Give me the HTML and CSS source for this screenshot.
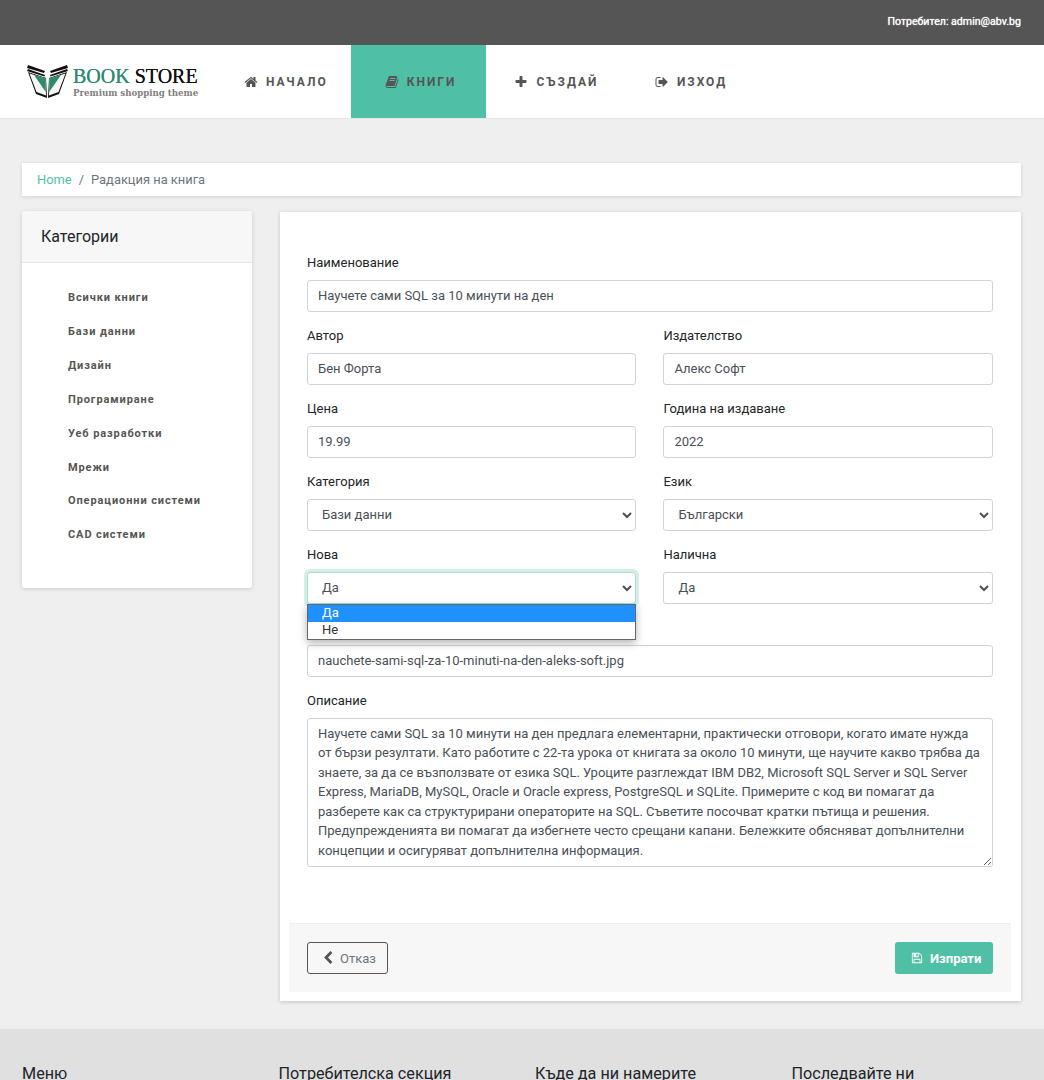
FILE: index.html
```html
<!DOCTYPE html>
<html lang="bg">
<head>
<meta charset="utf-8">
<title>Book Store</title>
<link rel="stylesheet" href="styles.css">
</head>
<body>
<div class="topbar"><span class="user">Потребител: admin@abv.bg</span></div>
<header class="header">
  <a class="logo" href="#">
    <svg class="logo-mark" viewBox="0 0 41 33" aria-hidden="true">
      <path d="M1 0l17 6-1 2L0 3zM40 0L23 6l1 2 17-5z" fill="#111"/>
      <path d="M1 4l17 6-.5 1.500L0 6zM40 4l-17 6 .5 1.500L41 6z" fill="#111"/>
      <path d="M1 7l18 6 1 20-11-4z" fill="#111"/>
      <path d="M40 7l-18 6-1 20 11-4z" fill="#111"/>
      <path d="M2.500 8.500l16 5 .5 17-9.500-3.500z" fill="#f4f7f6"/>
      <path d="M38.500 8.500l-16 5-.5 17 9.500-3.500z" fill="#f4f7f6"/>
      <path d="M7 10l11.500 3.500.3 13.500z" fill="#2e8b6a"/>
      <path d="M34 10l-11.500 3.500-.3 13.500z" fill="#2e8b6a"/>
    </svg>
    <span class="logo-text">
      <span class="logo-title"><span class="logo-green">BOOK</span> STORE</span>
      <span class="logo-sub">Premium shopping theme</span>
    </span>
  </a>
  <nav class="nav">
    <a class="nav-item nav-first" href="#"><svg class="icon" viewBox="0 0 1792 1792"><path d="M1472 992v480q0 26-19 45t-45 19h-384v-384h-256v384h-384q-26 0-45-19t-19-45v-480q0-1 .5-3t.5-3l575-474 575 474q1 2 1 6zm223-69l-62 74q-8 9-21 11h-3q-13 0-21-7l-692-577-692 577q-12 8-24 7-13-2-21-11l-62-74q-8-10-7-23.5t11-21.5l719-599q32-26 76-26t76 26l244 204v-195q0-14 9-23t23-9h192q14 0 23 9t9 23v408l219 182q10 8 11 21.5t-7 23.500z"/></svg>НАЧАЛО</a>
    <a class="nav-item nav-active" href="#"><svg class="icon" viewBox="0 0 1792 1792"><path d="M1703 478q40 57 18 129l-275 906q-19 64-76.500 107.500t-122.500 43.500h-923q-77 0-148.500-53.500t-99.500-131.500q-24-67-2-127 0-4 3-27t4-37q1-8-3-21.500t-3-19.500q2-11 8-21t16.500-23.500 16.500-23.500q23-38 45-91.500t30-91.500q3-10 .5-30t-.5-28q3-11 17-28t17-23q21-36 42-92t25-90q1-9-2.500-32t.5-28q4-13 22-30.500t22-22.500q19-26 42.500-84.500t27.500-96.500q1-8-3-25.500t-2-26.500q2-8 9-18t18-23 17-21q8-12 16.500-30.500t15-35 16-36 19.500-32 26.500-23.500 36-11.500 47.500 5.500l-1 3q38-9 51-9h761q74 0 114 56t18 130l-274 906q-36 119-71.500 153.500t-128.500 34.500h-869q-27 0-38 15-11 16-1 43 24 70 144 70h923q29 0 56-15.500t35-41.500l300-987q7-22 5-57 38 15 59 43zm-1064 2q-4 13 2 22.500t20 9.500h608q13 0 25.500-9.500t16.500-22.500l21-64q4-13-2-22.500t-20-9.500h-608q-13 0-25.500 9.500t-16.500 22.500zm-83 256q-4 13 2 22.500t20 9.500h608q13 0 25.500-9.500t16.500-22.500l21-64q4-13-2-22.500t-20-9.500h-608q-13 0-25.500 9.500t-16.500 22.500z"/></svg>КНИГИ</a>
    <a class="nav-item" href="#"><svg class="icon" viewBox="0 0 1792 1792"><path d="M1600 736v192q0 40-28 68t-68 28h-416v416q0 40-28 68t-68 28h-192q-40 0-68-28t-28-68v-416h-416q-40 0-68-28t-28-68v-192q0-40 28-68t68-28h416v-416q0-40 28-68t68-28h192q40 0 68 28t28 68v416h416q40 0 68 28t28 68z"/></svg>СЪЗДАЙ</a>
    <a class="nav-item" href="#"><svg class="icon" viewBox="0 0 1792 1792"><path d="M704 1440q0 4 1 20t.5 26.500-3 23.500-10 19.500-20.500 6.500h-320q-119 0-203.500-84.500t-84.500-203.500v-704q0-119 84.500-203.500t203.500-84.500h320q13 0 22.500 9.500t9.500 22.500q0 4 1 20t.5 26.500-3 23.500-10 19.500-20.500 6.500h-320q-66 0-113 47t-47 113v704q0 66 47 113t113 47h312l11.500 1 11.500 3 8 5.500 7 9 2 13.500zm928-544q0 26-19 45l-544 544q-19 19-45 19t-45-19-19-45v-288h-448q-26 0-45-19t-19-45v-384q0-26 19-45t45-19h448v-288q0-26 19-45t45-19 45 19l544 544q19 19 19 45z"/></svg>ИЗХОД</a>
  </nav>
</header>

<main class="page">
  <div class="breadcrumb"><a href="#">Home</a><span class="sep">/</span><span class="crumb">Радакция на книга</span></div>
  <div class="layout">
    <aside class="side-card">
      <div class="side-head">Категории</div>
      <ul class="cat-list">
        <li><a href="#">Всички книги</a></li>
        <li><a href="#">Бази данни</a></li>
        <li><a href="#">Дизайн</a></li>
        <li><a href="#">Програмиране</a></li>
        <li><a href="#">Уеб разработки</a></li>
        <li><a href="#">Мрежи</a></li>
        <li><a href="#">Операционни системи</a></li>
        <li><a href="#">CAD системи</a></li>
      </ul>
    </aside>
    <form class="main-card">
      <div class="form-body">
        <div class="group">
          <label class="label">Наименование</label>
          <input class="control" type="text" value="Научете сами SQL за 10 минути на ден">
        </div>
        <div class="row">
          <div class="group"><label class="label">Автор</label><input class="control" type="text" value="Бен Форта"></div>
          <div class="group"><label class="label">Издателство</label><input class="control" type="text" value="Алекс Софт"></div>
        </div>
        <div class="row">
          <div class="group"><label class="label">Цена</label><input class="control" type="text" value="19.99"></div>
          <div class="group"><label class="label">Година на издаване</label><input class="control" type="text" value="2022"></div>
        </div>
        <div class="row">
          <div class="group"><label class="label">Категория</label><select class="control"><option>Бази данни</option></select></div>
          <div class="group"><label class="label">Език</label><select class="control"><option>Български</option></select></div>
        </div>
        <div class="row">
          <div class="group select-open">
            <label class="label">Нова</label>
            <select class="control control-focus"><option>Да</option><option>Не</option></select>
            <div class="popup"><div class="popup-opt popup-sel">Да</div><div class="popup-opt">Не</div></div>
          </div>
          <div class="group"><label class="label">Налична</label><select class="control"><option>Да</option></select></div>
        </div>
        <div class="group">
          <div class="label"></div>
          <input class="control" type="text" value="nauchete-sami-sql-za-10-minuti-na-den-aleks-soft.jpg">
        </div>
        <div class="group">
          <label class="label">Описание</label>
          <textarea class="control area">Научете сами SQL за 10 минути на ден предлага елементарни, практически отговори, когато имате нужда от бързи резултати. Като работите с 22-та урока от книгата за около 10 минути, ще научите какво трябва да знаете, за да се възползвате от езика SQL. Уроците разглеждат IBM DB2, Microsoft SQL Server и SQL Server Express, MariaDB, MySQL, Oracle и Oracle express, PostgreSQL и SQLite. Примерите с код ви помагат да разберете как са структурирани операторите на SQL. Съветите посочват кратки пътища и решения. Предупрежденията ви помагат да избегнете често срещани капани. Бележките обясняват допълнителни концепции и осигуряват допълнителна информация.</textarea>
        </div>
      </div>
      <div class="form-foot">
        <a class="btn btn-outline" href="#"><svg class="icon icon-chev" viewBox="0 0 1792 1792"><path d="M1427 301l-531 531 531 531q19 19 19 45t-19 45l-166 166q-19 19-45 19t-45-19l-742-742q-19-19-19-45t19-45l742-742q19-19 45-19t45 19l166 166q19 19 19 45t-19 45z"/></svg>Отказ</a>
        <button class="btn btn-teal" type="button"><svg class="icon icon-save" viewBox="0 0 1792 1792"><path d="M512 1536h768v-384h-768v384zm896 0h128v-896q0-14-10-38.500t-20-34.500l-281-281q-10-10-34-20t-39-10v416q0 40-28 68t-68 28h-576q-40 0-68-28t-28-68v-416h-128v1280h128v-416q0-40 28-68t68-28h832q40 0 68 28t28 68v416zm-384-928v-320q0-13-9.500-22.500t-22.500-9.500h-192q-13 0-22.500 9.500t-9.500 22.500v320q0 13 9.500 22.500t22.500 9.500h192q13 0 22.500-9.500t9.500-22.500zm640 32v928q0 40-28 68t-68 28h-1344q-40 0-68-28t-28-68v-1344q0-40 28-68t68-28h928q40 0 88 20t76 48l280 280q28 28 48 76t20 88z"/></svg>Изпрати</button>
      </div>
    </form>
  </div>
</main>

<footer class="footer">
  <h4 class="foot-title">Меню</h4>
  <h4 class="foot-title">Потребителска секция</h4>
  <h4 class="foot-title">Къде да ни намерите</h4>
  <h4 class="foot-title">Последвайте ни</h4>
</footer>
</body>
</html>
```
FILE: styles.css
```css
* { box-sizing: border-box; }
html, body { margin: 0; padding: 0; }
body {
  height: 1080px;
  overflow: hidden;
  background: #efefef;
  font-family: Roboto, "Liberation Sans", sans-serif;
  font-size: 14px;
  color: #212529;
}
a { text-decoration: none; }

.topbar {
  height: 45px;
  background: #555;
  display: flex;
  justify-content: flex-end;
  align-items: center;
  padding: 0 23px 3px 0;
}
.user { color: #fff; font-size: 10.600px; text-shadow: 0 0 1px #fff; }

.header {
  height: 74px;
  background: #fff;
  display: flex;
  padding-left: 27px;
  border-bottom: 1px solid #e6e6e6;
}
.logo { width: 183px; display: flex; align-items: flex-start; padding-top: 20px; }
.logo-mark { width: 41px; height: 33px; margin-right: 5px; flex: none; }
.logo-text { display: flex; flex-direction: column; }
.logo-title { font-family: "Liberation Serif", serif; font-size: 20px; line-height: 22px; color: #111; white-space: nowrap; text-shadow: 0 0 .5px currentColor; }
.logo-green { color: #2e8b6a; }
.logo-sub { font-family: "DejaVu Serif", serif; font-weight: bold; font-size: 8.650px; line-height: 12px; color: #808080; white-space: nowrap; }

.nav { display: flex; height: 73px; }
.nav-item {
  display: flex;
  align-items: center;
  padding: 0 28.500px 0 28px;
  color: #555;
  font-weight: 700;
  font-size: 12px;
  letter-spacing: 2px;
  white-space: nowrap;
}
.nav-first { padding: 0 23px 0 34px; }
.nav-active { background: #4fbfa5; padding: 0 30px 0 34px; }
.icon { width: 14px; height: 14px; fill: currentColor; margin-right: 8px; flex: none; }

.page { padding: 44px 23px 28px 22px; }
.breadcrumb {
  height: 33px;
  background: #fff;
  box-shadow: 0 1px 4px rgba(0,0,0,.12);
  display: flex;
  align-items: center;
  padding-left: 15px;
  font-size: 12.900px;
  color: #6c757d;
}
.breadcrumb a { color: #4fbfa5; }
.sep { margin: 0 7px; }
.crumb { color: #6c757d; }

.layout { display: grid; grid-template-columns: 230px 741px; column-gap: 28px; margin-top: 15px; align-items: start; }

.side-card { background: #fff; border-radius: 3px; box-shadow: 0 1px 4px rgba(0,0,0,.15); height: 377px; overflow: hidden; }
.side-head {
  height: 52px;
  background: #f7f7f7;
  border-bottom: 1px solid #e5e5e5;
  padding: 14px 19px 0;
  font-size: 16px;
  line-height: 24px;
  color: #212529;
}
.cat-list { list-style: none; margin: 0; padding: 16.300px 0 0 46px; }
.cat-list li { height: 33.850px; line-height: 34px; }
.cat-list a { color: #555; font-weight: 700; font-size: 11px; letter-spacing: .9px; }

.main-card { background: #fff; margin-top: 1px; padding: 0 10px 9px 9px; box-shadow: 0 1px 4px rgba(0,0,0,.18); }
.form-body { padding: 40px 18px 43px; }
.group { margin-bottom: 13px; position: relative; min-width: 0; }
.row { display: grid; grid-template-columns: 329.400px 329.600px; column-gap: 27px; }
.label { display: block; height: 21px; line-height: 21px; margin-bottom: 7px; font-size: 13px; color: #212529; }
.control {
  display: block;
  width: 100%;
  height: 32px;
  padding: 0 10px 2px;
  border: 1px solid #ced4da;
  border-radius: 3px;
  background: #fff;
  font-family: Roboto, "Liberation Sans", sans-serif;
  font-size: 13px;
  color: #495057;
  outline: none;
}
.control-focus { border-color: #a9e0d3; box-shadow: 0 0 0 3px rgba(79,191,165,.25); }
.area { height: 149px; padding: 4.500px 10px; line-height: 19.500px; resize: vertical; }

.popup {
  position: absolute;
  left: 0;
  right: 0;
  top: 60px;
  z-index: 5;
  height: 36px;
  background: #fff;
  border: 1px solid #666;
  box-shadow: 0 3px 8px rgba(0,0,0,.3);
  font-size: 13px;
  color: #333;
}
.popup-opt { height: 17px; line-height: 16px; padding-left: 14px; }
.popup-sel { background: #1e90ff; color: #fff; }

.form-foot {
  height: 69px;
  background: #f7f7f7;
  border-top: 1px solid #eee;
  display: flex;
  justify-content: space-between;
  align-items: center;
  padding: 0 18px;
}
.btn {
  display: inline-flex;
  align-items: center;
  height: 32px;
  border-radius: 3px;
  font-family: Roboto, "Liberation Sans", sans-serif;
  font-size: 13px;
}
.btn-outline { width: 81px; padding-left: 13px; border: 1px solid #555; color: #6c757d; }
.icon-chev { width: 14px; height: 14px; color: #555; margin-right: 5px; }
.btn-teal { width: 98px; padding: 0 0 0 16px; border: 0; background: #4fbfa5; color: #fff; font-weight: 700; }
.icon-save { width: 12px; height: 12px; margin-right: 7px; }

.footer {
  background: #e0e0e0;
  padding: 34px 0 20px 22px;
  display: grid;
  grid-template-columns: repeat(4, 256.500px);
}
.foot-title { margin: 0; font-weight: 400; font-size: 16.200px; line-height: 22px; color: #212529; }
```
